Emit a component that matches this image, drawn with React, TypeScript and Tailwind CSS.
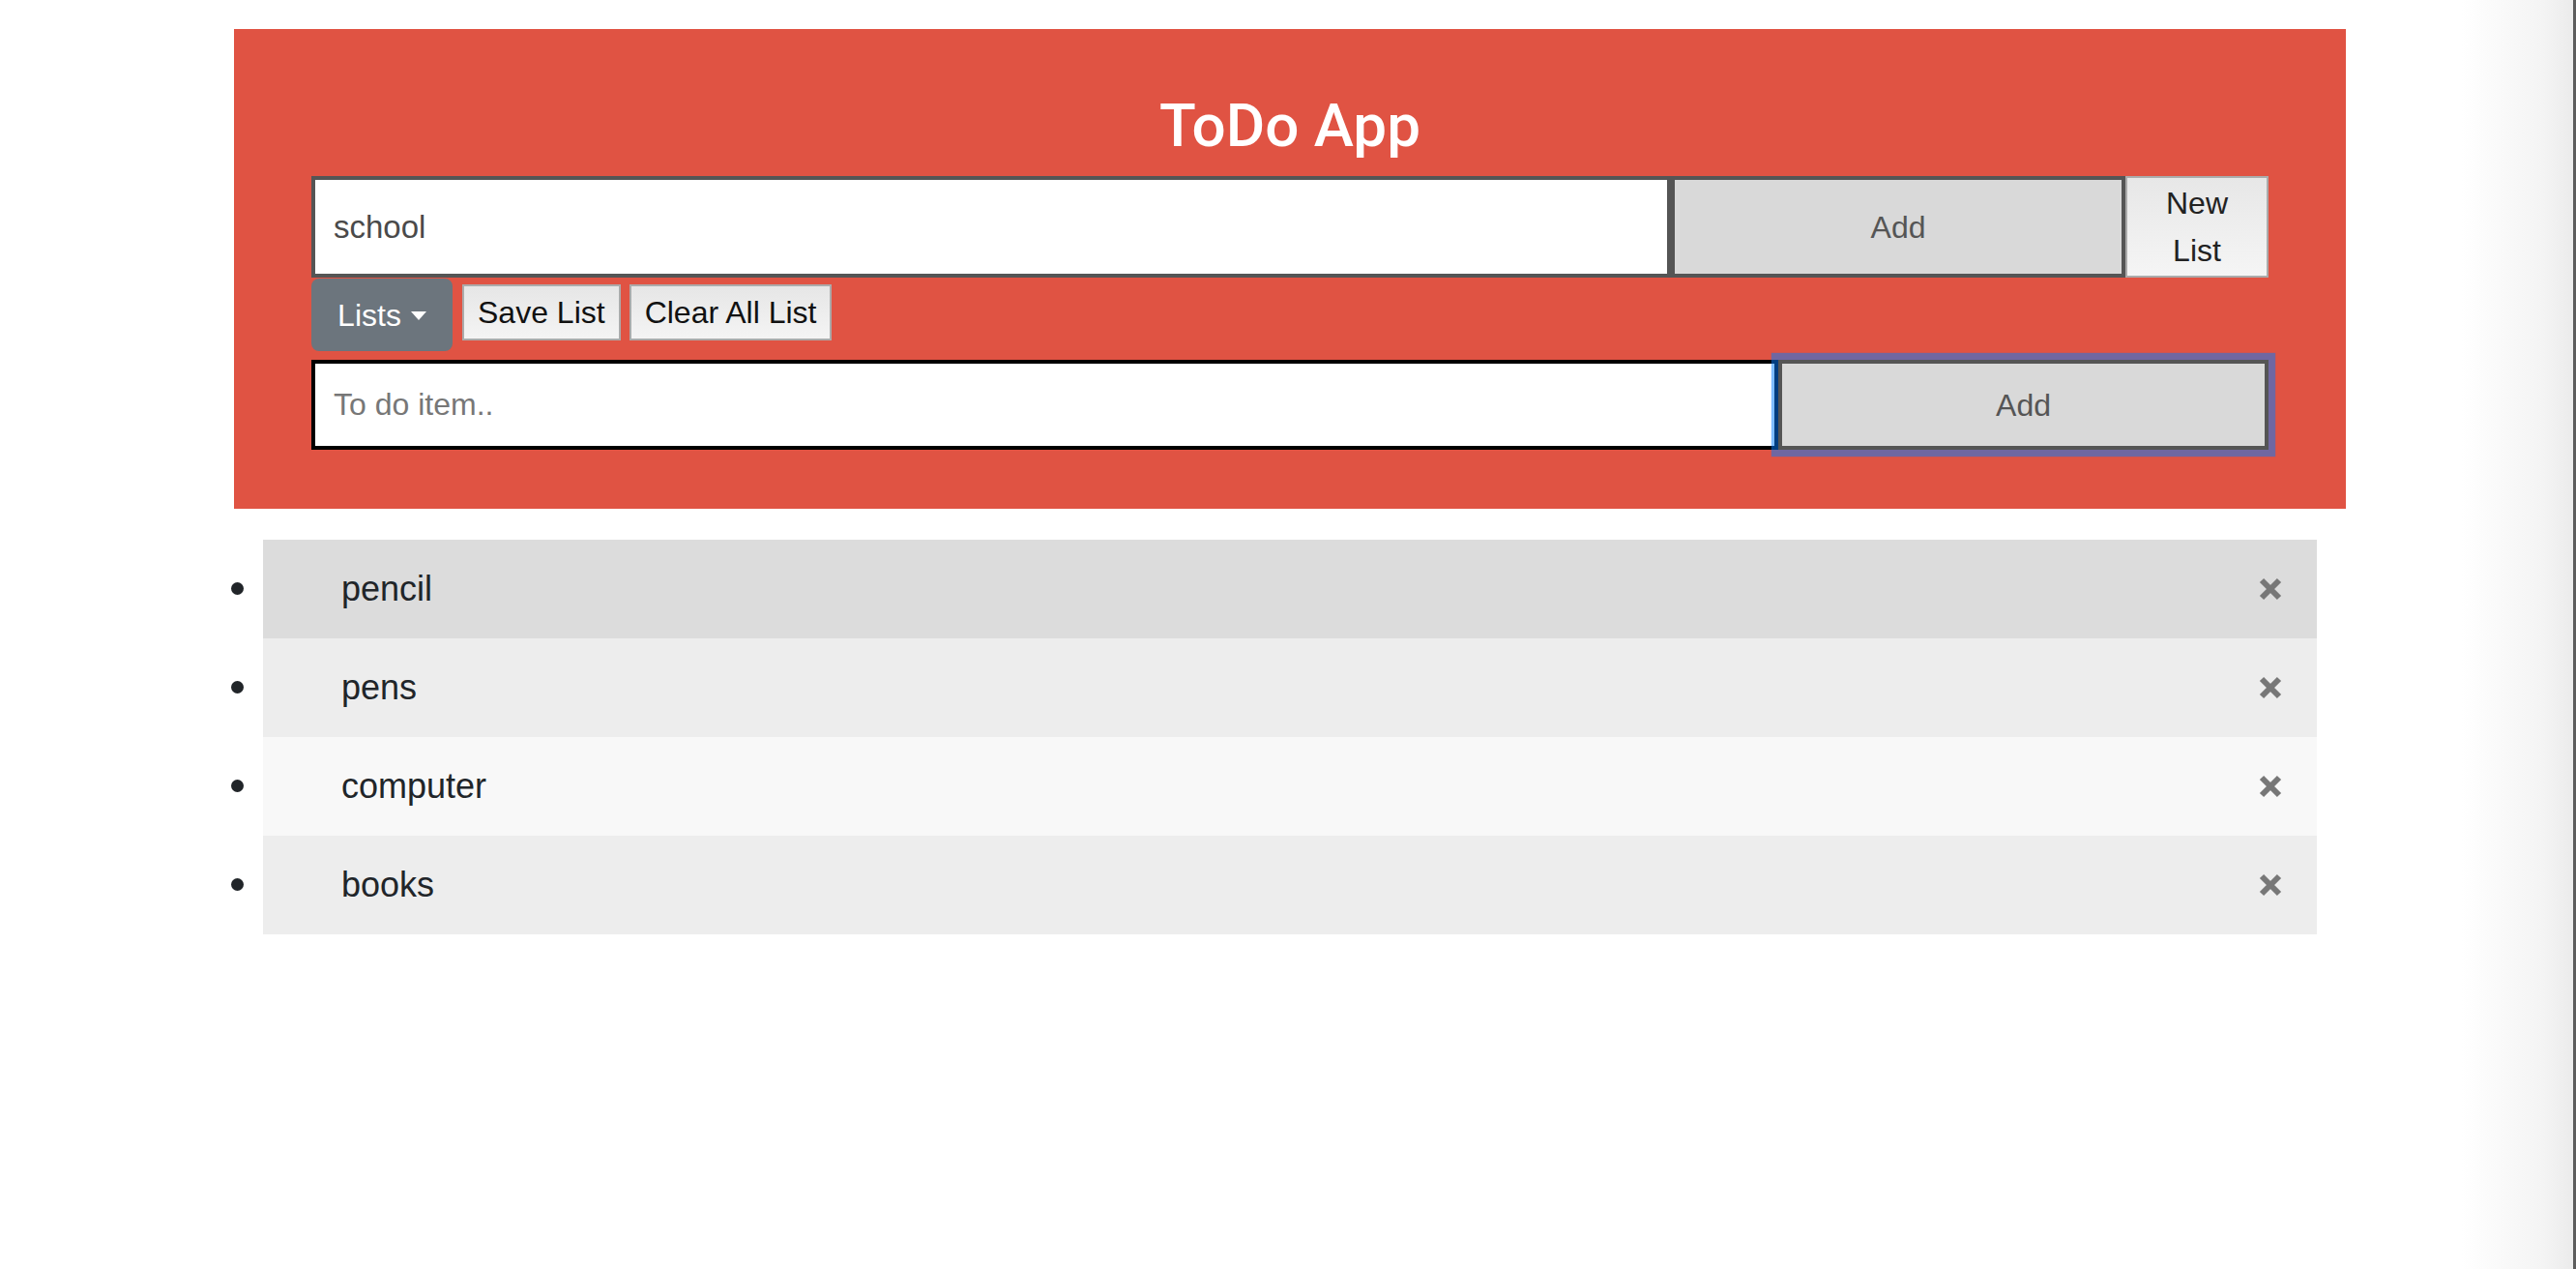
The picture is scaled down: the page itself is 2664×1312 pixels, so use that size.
import React from "react";

const items = [
  { text: "pencil", bg: "bg-[#dcdcdc]" },
  { text: "pens", bg: "bg-[#ededed]" },
  { text: "computer", bg: "bg-[#f8f8f8]" },
  { text: "books", bg: "bg-[#ededed]" },
];

function XIcon() {
  return (
    <svg width="24" height="24" viewBox="0 0 24 24" className="block">
      <path d="M3 3 L21 21 M21 3 L3 21" stroke="#777777" strokeWidth="6" strokeLinecap="butt" fill="none" />
    </svg>
  );
}

export default function App() {
  return (
    <div className="min-h-screen w-full pt-[30px] font-['Liberation_Sans',Arial,sans-serif] bg-[linear-gradient(to_right,#ffffff_2545px,#f4f4f4_2630px,#ebebeb_2661px,#5c5c5c_2661px)]">
      <div className="ml-[242px] w-[2184px] bg-[#e05343] px-[80px] pt-[63px] pb-[61px]">
        <h1 className="text-center text-white text-[62px] leading-[74px] mb-[15px] font-medium font-['Roboto','Liberation_Sans',sans-serif]">ToDo App</h1>

        <div className="flex h-[105px]">
          <input
            readOnly
            value="school"
            className="w-[1406px] h-full border-4 border-[#555555] bg-white pl-[19px] text-[33px] text-[#4a4a4a] outline-none"
          />
          <button className="w-[470px] h-full border-4 border-[#555555] bg-[#d9d9d9] text-[32px] text-[#555555]">
            Add
          </button>
          <button className="w-[148px] h-full border-2 border-[#ababab] bg-[linear-gradient(to_bottom,#e7e7e7,#f5f5f5)] text-[32px] leading-[49px] text-[#222222]">
            New
            <br />
            List
          </button>
        </div>

        <div className="flex items-start gap-[10px] mt-[1px] h-[75px]">
          <button className="h-[75px] w-[146px] rounded-[8px] bg-[#6c757d] text-white text-[32px] flex items-center justify-center gap-[10px]">
            <span>Lists</span>
            <span className="inline-block w-0 h-0 border-l-[8px] border-r-[8px] border-t-[9px] border-l-transparent border-r-transparent border-t-white mt-[2px]" />
          </button>
          <button className="mt-[6px] h-[58px] px-[14px] border-2 border-[#ababab] bg-[linear-gradient(to_bottom,#e6e6e6,#f4f4f4)] text-[32px] text-[#111111]">
            Save List
          </button>
          <button className="mt-[6px] -ml-[1px] h-[58px] px-[14px] border-2 border-[#ababab] bg-[linear-gradient(to_bottom,#e6e6e6,#f4f4f4)] text-[32px] text-[#111111]">
            Clear All List
          </button>
        </div>

        <div className="flex h-[93px] mt-[9px]">
          <input
            readOnly
            placeholder="To do item.."
            className="w-[1517px] h-full border-4 border-black bg-white pl-[19px] text-[32px] text-[#4a4a4a] placeholder:text-[#777777] outline-none"
          />
          <button className="w-[507px] h-full border-4 border-[#555555] bg-[#d9d9d9] text-[32px] text-[#555555] shadow-[0_0_1px_7px_rgba(0,123,255,0.5)]">
            Add
          </button>
        </div>
      </div>

      <ul className="list-disc list-outside ml-[272px] w-[2124px] mt-[32px] text-[#212529]">
        {items.map((it) => (
          <li key={it.text} className={`${it.bg} h-[102px] text-[36px] marker:text-[44px]`}>
            <div className="flex h-full items-center justify-between pl-[81px] pr-[36px]">
              <span>{it.text}</span>
              <XIcon />
            </div>
          </li>
        ))}
      </ul>
    </div>
  );
}
